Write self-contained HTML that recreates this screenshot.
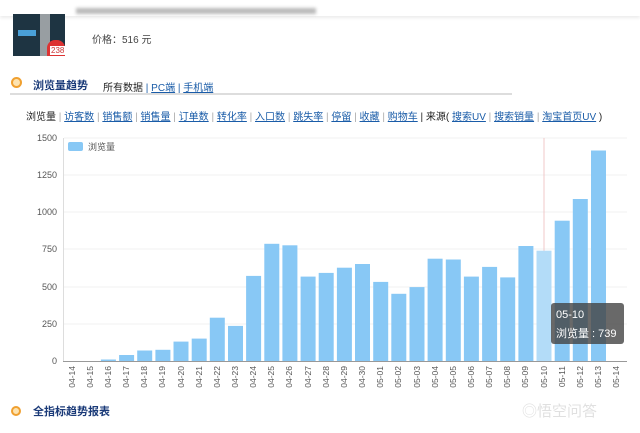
<!DOCTYPE html>
<html><head><meta charset="utf-8"><style>
body{margin:0;width:640px;height:433px;background:#fff;overflow:hidden;font-family:"Liberation Sans","Noto Sans CJK SC",sans-serif;position:relative}
.a{position:absolute}
a{color:#1a5ca8;text-decoration:underline}
</style></head><body>
<div class="a" style="left:0;top:0;width:640px;height:16px;background:#fff;box-shadow:0 2px 3px rgba(0,0,0,.08)"></div>
<div class="a" style="left:76px;top:8px;width:240px;height:6px;background:#777;opacity:.5;filter:blur(1.5px)"></div>
<div class="a" style="left:13px;top:14px;width:52px;height:42px;background:#1e3442"></div>
<div class="a" style="left:18px;top:30px;width:18px;height:6px;background:#4aa0d8"></div>
<div class="a" style="left:40px;top:14px;width:10px;height:42px;background:#ccc;opacity:.7"></div>
<div class="a" style="left:47px;top:40px;width:18px;height:16px;background:#d33;border-radius:8px 8px 0 0"></div>
<div class="a" style="left:50px;top:46px;font-size:8px;color:#fff;background:#fff;color:#c33;padding:0 1px">238</div>
<div class="a" style="left:92px;top:31px;font-size:10px;color:#444">价格：516 元</div>
<div class="a" style="left:11px;top:77px;width:7px;height:7px;border:2px solid #f0a030;border-radius:50%;background:#fde3b0"></div>
<div class="a" style="left:33px;top:77px;font-size:11px;color:#1a3a78;font-weight:bold">浏览量趋势</div>
<div class="a" style="left:103px;top:79px;font-size:10px;color:#222">所有数据 <span style="color:#1a5ca8">|</span> <a>PC端</a> <span style="color:#1a5ca8">|</span> <a>手机端</a></div>
<div class="a" style="left:10px;top:93px;width:502px;height:2px;background:#ddd"></div>
<div class="a" style="left:26px;top:108px;font-size:10px;color:#222;white-space:nowrap">浏览量 <span style="color:#aaa">|</span> <a>访客数</a> <span style="color:#aaa">|</span> <a>销售额</a> <span style="color:#aaa">|</span> <a>销售量</a> <span style="color:#aaa">|</span> <a>订单数</a> <span style="color:#aaa">|</span> <a>转化率</a> <span style="color:#aaa">|</span> <a>入口数</a> <span style="color:#aaa">|</span> <a>跳失率</a> <span style="color:#aaa">|</span> <a>停留</a> <span style="color:#aaa">|</span> <a>收藏</a> <span style="color:#aaa">|</span> <a>购物车</a> | 来源( <a>搜索UV</a> <span style="color:#aaa">|</span> <a>搜索销量</a> <span style="color:#aaa">|</span> <a>淘宝首页UV</a> )</div>
<svg class="a" style="left:0;top:0" width="640" height="433" font-family="Liberation Sans,Noto Sans CJK SC,sans-serif">
<g stroke="#f2f2f2" stroke-width="1">
<line x1="64" y1="138" x2="627" y2="138"/><line x1="64" y1="175" x2="627" y2="175"/><line x1="64" y1="212" x2="627" y2="212"/><line x1="64" y1="249" x2="627" y2="249"/><line x1="64" y1="287" x2="627" y2="287"/><line x1="64" y1="324" x2="627" y2="324"/>
</g>
<line x1="63.5" y1="138" x2="63.5" y2="361" stroke="#ddd"/>
<line x1="544" y1="138" x2="544" y2="361" stroke="#f0c8c8"/>
<g font-size="9" fill="#555" text-anchor="end">
<text x="57" y="141">1500</text><text x="57" y="178">1250</text><text x="57" y="215">1000</text><text x="57" y="252">750</text><text x="57" y="290">500</text><text x="57" y="327">250</text><text x="57" y="364">0</text>
</g>
<rect x="68" y="142" width="15" height="9" rx="2" fill="#88c8f5"/>
<text x="88" y="150" font-size="9" fill="#555">浏览量</text>
<g transform="translate(0,361) scale(1,-1)" fill="#88c8f5">
<rect x="100.9" width="15" height="1.5"/><rect x="119.1" width="15" height="6"/><rect x="137.2" width="15" height="10.5"/><rect x="155.4" width="15" height="11.2"/><rect x="173.5" width="15" height="19.4"/><rect x="191.7" width="15" height="22.4"/><rect x="209.8" width="15" height="43.3"/><rect x="228" width="15" height="35.1"/><rect x="246.1" width="15" height="85.1"/><rect x="264.3" width="15" height="117.2"/><rect x="282.4" width="15" height="115.7"/><rect x="300.6" width="15" height="84.4"/><rect x="318.7" width="15" height="88.1"/><rect x="336.9" width="15" height="93.3"/><rect x="355" width="15" height="97"/><rect x="373.2" width="15" height="79.1"/><rect x="391.3" width="15" height="67.2"/><rect x="409.5" width="15" height="73.9"/><rect x="427.6" width="15" height="102.3"/><rect x="445.8" width="15" height="101.5"/><rect x="463.9" width="15" height="84.4"/><rect x="482.1" width="15" height="94.1"/><rect x="500.2" width="15" height="83.6"/><rect x="518.4" width="15" height="115"/><rect x="536.5" width="15" height="110.3" fill="#b3dcf8"/><rect x="554.7" width="15" height="140.3"/><rect x="572.8" width="15" height="162"/><rect x="591" width="15" height="210.5"/>
</g>
<line x1="63" y1="361.5" x2="627" y2="361.5" stroke="#999"/>
<g font-size="8.5" fill="#555" text-anchor="end">
<text transform="translate(75,366) rotate(-90)">04-14</text><text transform="translate(93,366) rotate(-90)">04-15</text><text transform="translate(111,366) rotate(-90)">04-16</text><text transform="translate(129,366) rotate(-90)">04-17</text><text transform="translate(147,366) rotate(-90)">04-18</text><text transform="translate(165,366) rotate(-90)">04-19</text><text transform="translate(184,366) rotate(-90)">04-20</text><text transform="translate(202,366) rotate(-90)">04-21</text><text transform="translate(220,366) rotate(-90)">04-22</text><text transform="translate(238,366) rotate(-90)">04-23</text><text transform="translate(256,366) rotate(-90)">04-24</text><text transform="translate(274,366) rotate(-90)">04-25</text><text transform="translate(292,366) rotate(-90)">04-26</text><text transform="translate(311,366) rotate(-90)">04-27</text><text transform="translate(329,366) rotate(-90)">04-28</text><text transform="translate(347,366) rotate(-90)">04-29</text><text transform="translate(365,366) rotate(-90)">04-30</text><text transform="translate(383,366) rotate(-90)">05-01</text><text transform="translate(401,366) rotate(-90)">05-02</text><text transform="translate(420,366) rotate(-90)">05-03</text><text transform="translate(438,366) rotate(-90)">05-04</text><text transform="translate(456,366) rotate(-90)">05-05</text><text transform="translate(474,366) rotate(-90)">05-06</text><text transform="translate(492,366) rotate(-90)">05-07</text><text transform="translate(510,366) rotate(-90)">05-08</text><text transform="translate(528,366) rotate(-90)">05-09</text><text transform="translate(547,366) rotate(-90)">05-10</text><text transform="translate(565,366) rotate(-90)">05-11</text><text transform="translate(583,366) rotate(-90)">05-12</text><text transform="translate(601,366) rotate(-90)">05-13</text><text transform="translate(619,366) rotate(-90)">05-14</text>
</g>
<rect x="551" y="303" width="73" height="41" rx="3" fill="#444" fill-opacity=".8"/>
<text x="556" y="318" font-size="11" fill="#fff">05-10</text>
<text x="556" y="337" font-size="11" fill="#fff">浏览量 : 739</text>
<circle cx="16" cy="411" r="4" fill="#fde3b0" stroke="#f0a030" stroke-width="2"/>
<text x="33" y="415" font-size="11" font-weight="bold" fill="#1a3a78">全指标趋势报表</text>
<text x="522" y="416" font-size="15" fill="#ddd" fill-opacity=".9">◎悟空问答</text>
</svg>
</body></html>
